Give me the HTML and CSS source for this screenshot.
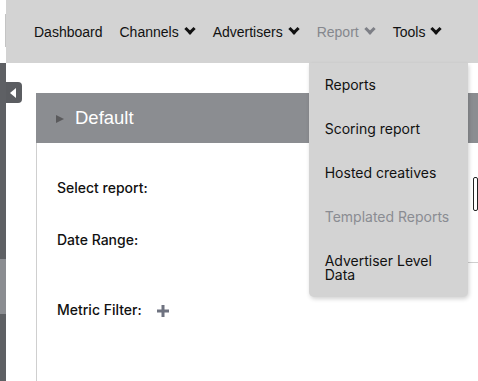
FILE: index.html
```html
<!DOCTYPE html>
<html lang="en">
<head>
  <meta charset="UTF-8">
  <meta name="viewport" content="width=device-width, initial-scale=1.0">
  <title>Report</title>
  <link rel="stylesheet" href="styles.css">
</head>
<body>
  <div id="header">
    <div class="edge"><div class="edge-line"></div></div>
    <nav class="topbar">
      <a class="nav-item" href="#">Dashboard</a>
      <a class="nav-item" href="#">Channels <span class="chev"></span></a>
      <a class="nav-item" href="#">Advertisers <span class="chev"></span></a>
      <div class="nav-item active">Report <span class="chev"></span>
        <ul class="dropdown">
          <li>Reports</li>
          <li>Scoring report</li>
          <li>Hosted creatives</li>
          <li class="disabled">Templated Reports</li>
          <li>Advertiser Level Data</li>
        </ul>
      </div>
      <a class="nav-item" href="#">Tools <span class="chev"></span></a>
    </nav>
  </div>

  <div id="main">
    <div class="sidebar">
      <div class="seg dark"></div>
      <div class="seg light"></div>
      <div class="seg fill"></div>
    </div>
    <div class="toggle"><span class="tri-left"></span></div>

    <div class="panel">
      <div class="panel-head">
        <span class="tri-right"></span>
        <span class="panel-title">Default</span>
      </div>
      <div class="panel-body">
        <div class="row row-report">
          <label class="label">Select report:</label>
          <div class="select-box"></div>
        </div>
        <div class="row row-date">
          <label class="label">Date Range:</label>
          <div class="date-field"></div>
        </div>
        <div class="row row-metric">
          <label class="label short">Metric Filter:</label>
          <svg class="plus" width="12" height="12" viewBox="0 0 12 12">
            <rect x="4.5" y="0" width="3" height="12" fill="#6f7380"/>
            <rect x="0" y="4.5" width="12" height="3" fill="#6f7380"/>
          </svg>
        </div>
      </div>
    </div>
  </div>
</body>
</html>
```

FILE: styles.css
```css
body {
  margin: 0;
  padding: 0;
  font-family: "Liberation Sans", Arial, sans-serif;
  background-color: #fff;
  color: #111;
  height: 381px;
  overflow: hidden;
}

#header {
  display: flex;
  height: 63px;
}

.edge {
  width: 6px;
  display: flex;
  justify-content: flex-end;
}

.edge-line {
  width: 1px;
  margin: 14px 0 16px;
  background-color: #c4c4c4;
}

.topbar {
  flex-grow: 1;
  display: flex;
  align-items: center;
  gap: 17px;
  padding-left: 28px;
  background-color: #d3d3d3;
}

.nav-item {
  position: relative;
  font-size: 14px;
  color: #111;
  text-decoration: none;
  display: flex;
  align-items: center;
  gap: 5px;
}

.nav-item.active {
  color: #85878d;
}

.chev {
  display: inline-block;
  width: 12px;
  height: 8px;
  position: relative;
}

.chev::before {
  content: "";
  position: absolute;
  left: 2px;
  top: -3px;
  width: 5px;
  height: 5px;
  border-right: 3px solid #111;
  border-bottom: 3px solid #111;
  transform: rotate(45deg);
}

.active .chev::before {
  border-color: #7d7f86;
}

.dropdown {
  position: absolute;
  left: -8px;
  top: 39px;
  width: 159px;
  margin: 0;
  padding: 0;
  list-style: none;
  background-color: #d3d3d3;
  border-radius: 0 0 5px 5px;
  box-shadow: 1px 2px 4px rgba(0, 0, 0, 0.18);
  font-family: Inter, Roboto, sans-serif;
  z-index: 5;
}

.dropdown li {
  padding: 15px 16px;
  font-size: 14px;
  line-height: 14px;
  color: #111;
}

.dropdown li.disabled {
  color: #8a8c92;
}

#main {
  display: flex;
  height: 318px;
}

.sidebar {
  width: 6px;
  display: flex;
  flex-direction: column;
}

.seg {
  flex-shrink: 0;
  background-color: #5e6064;
}

.seg.dark {
  height: 196px;
}

.seg.light {
  height: 55px;
  background-color: #8b8d91;
}

.seg.fill {
  flex-grow: 1;
}

.toggle {
  width: 16px;
  height: 21px;
  margin-top: 19px;
  background-color: #5b5d61;
  border-radius: 0 4px 4px 0;
  display: flex;
  align-items: center;
  justify-content: center;
}

.tri-left {
  width: 0;
  height: 0;
  border-top: 5px solid transparent;
  border-bottom: 5px solid transparent;
  border-right: 6px solid #fff;
  margin-right: 2px;
}

.panel {
  flex-grow: 1;
  margin-top: 30px;
  margin-left: 14px;
  display: flex;
  flex-direction: column;
}

.panel-head {
  height: 50px;
  background-color: #8b8d91;
  display: flex;
  align-items: center;
  padding-left: 20px;
}

.tri-right {
  width: 0;
  height: 0;
  border-top: 4.5px solid transparent;
  border-bottom: 4.5px solid transparent;
  border-left: 8px solid #5a5a5c;
  margin-top: 2px;
  margin-right: 11px;
}

.panel-title {
  font-size: 18.5px;
  color: #fff;
}

.panel-body {
  flex-grow: 1;
  border-left: 1px solid #cfcfcf;
  padding-left: 20px;
  padding-top: 34px;
  font-family: Inter, Roboto, sans-serif;
}

.row {
  display: flex;
  align-items: flex-start;
}

.label {
  width: 416px;
  flex-shrink: 0;
  font-size: 14px;
  line-height: 16px;
  font-weight: 500;
  color: #111;
}

.row-report {
  height: 34px;
}

.row-report .label {
  margin-top: 3px;
}

.select-box {
  flex-grow: 1;
  height: 32px;
  border: 1px solid #222;
  border-radius: 2px;
}

.row-date {
  margin-top: 21px;
  height: 31px;
}

.date-field {
  flex-grow: 1;
  height: 30px;
  margin-left: -5px;
  border-bottom: 1px solid #cfcfcf;
}

.row-metric {
  margin-top: 39px;
  align-items: center;
}

.label.short {
  width: 100px;
}

.plus {
  margin-top: 1px;
}
```
